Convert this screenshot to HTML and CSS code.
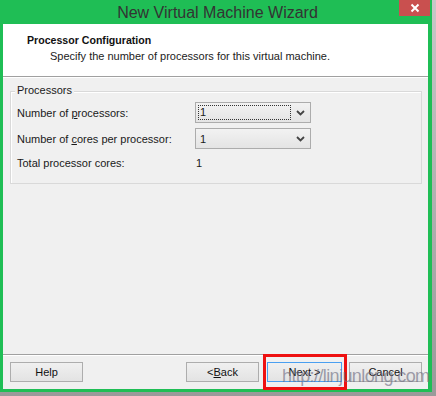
FILE: index.html
```html
<!DOCTYPE html>
<html>
<head>
<meta charset="utf-8">
<link rel="stylesheet" href="styles.css">
</head>
<body>
<div class="window">
  <div class="titlebar">
    <div class="title">New Virtual Machine Wizard</div>
    <div class="close">
      <svg width="10" height="10" viewBox="0 0 10 10"><path d="M1.5 1.5 L8.5 8.5 M8.5 1.5 L1.5 8.5" stroke="#fff" stroke-width="2"/></svg>
    </div>
  </div>
  <div class="client">
    <div class="header">
      <div class="h-title">Processor Configuration</div>
      <div class="h-sub">Specify the number of processors for this virtual machine.</div>
    </div>
    <div class="body">
      <div class="group">
        <div class="legend">Processors</div>
        <div class="row">
          <div class="label">Number of <u>p</u>rocessors:</div>
          <div class="select">
            <div class="focus">1</div>
            <svg class="chev" width="9" height="6" viewBox="0 0 9 6"><path d="M1 1 L4.5 4.5 L8 1" fill="none" stroke="#444" stroke-width="1.8"/></svg>
          </div>
        </div>
        <div class="row">
          <div class="label">Number of <u>c</u>ores per processor:</div>
          <div class="select">
            <div class="val">1</div>
            <svg class="chev" width="9" height="6" viewBox="0 0 9 6"><path d="M1 1 L4.5 4.5 L8 1" fill="none" stroke="#444" stroke-width="1.8"/></svg>
          </div>
        </div>
        <div class="row total">
          <div class="label">Total processor cores:</div>
          <div class="tval">1</div>
        </div>
      </div>
    </div>
    <div class="footer">
      <div class="btn help">Help</div>
      <div class="spacer"></div>
      <div class="btn back">&lt; <u>B</u>ack</div>
      <div class="nextwrap"><div class="btn next">Next &gt;</div></div>
      <div class="btn cancel">Cancel</div>
    </div>
  </div>
</div>
<div class="watermark">http://linjunlong.com</div>
</body>
</html>
```
FILE: styles.css
```css
html, body {
  margin: 0;
  padding: 0;
}
body {
  width: 436px;
  height: 396px;
  background: linear-gradient(to bottom, #c8c8c8, #9a9a9a);
  position: relative;
  overflow: hidden;
  font-family: "Liberation Sans", Arial, sans-serif;
  font-size: 11px;
  color: #1a1a1a;
}
.window {
  width: 432px;
  height: 392px;
  box-sizing: border-box;
  background: #1fbe55;
  padding: 0 4px 3px 3px;
  display: flex;
  flex-direction: column;
}
.titlebar {
  height: 24px;
  position: relative;
  display: flex;
  align-items: center;
  justify-content: center;
}
.title {
  font-size: 16px;
  color: #333;
  padding-top: 2px;
  margin-left: 4px;
}
.close {
  position: absolute;
  right: -2px;
  top: 0;
  width: 31px;
  height: 16px;
  background: #c9504f;
  display: flex;
  align-items: center;
  justify-content: center;
}
.client {
  flex: 1;
  background: #f0f0f0;
  display: flex;
  flex-direction: column;
}
.header {
  height: 53px;
  background: #fff;
  border-bottom: 1px solid #a0a0a0;
  box-shadow: 0 1px 0 #fff;
  box-sizing: border-box;
  padding: 10px 0 0 24px;
}
.h-title {
  font-weight: bold;
  font-size: 10.6px;
  color: #111;
}
.h-sub {
  margin-top: 4px;
  padding-left: 23px;
  color: #222;
}
.body {
  flex: 1;
  padding: 14px 6px 0 7px;
}
.group {
  border: 1px solid #d9d9d9;
  box-shadow: inset 1px 1px 0 #fff;
  height: 93px;
  position: relative;
  padding: 10px 0 0 6px;
  box-sizing: border-box;
}
.legend {
  position: absolute;
  left: 4px;
  top: -8px;
  background: #f0f0f0;
  padding: 0 2px;
}
.row {
  display: flex;
  align-items: center;
  height: 21px;
  margin-bottom: 5px;
}
.row.total {
  margin-top: 4px;
  height: 18px;
}
.label {
  width: 178px;
}
.select {
  width: 116px;
  height: 21px;
  box-sizing: border-box;
  border: 1px solid #acacac;
  background: linear-gradient(to bottom, #f2f2f2, #e4e4e4);
  display: flex;
  align-items: center;
  padding: 2px;
}
.focus {
  width: 93px;
  height: 15px;
  box-sizing: border-box;
  border: 1px dotted #333;
  line-height: 13px;
  padding-left: 1px;
}
.val {
  width: 93px;
  padding-left: 2px;
}
.chev {
  margin-left: auto;
  margin-right: 3px;
}
.tval {
  padding-left: 1px;
}
.footer {
  height: 35px;
  border-top: 1px solid #a0a0a0;
  box-shadow: inset 0 1px 0 #fff;
  display: flex;
  align-items: center;
  padding: 0 6px 0 7px;
  box-sizing: border-box;
}
.spacer {
  flex: 1;
}
.btn {
  width: 73px;
  height: 20px;
  box-sizing: border-box;
  border: 1px solid #adadad;
  background: linear-gradient(to bottom, #f0f0f0, #e3e3e3);
  display: flex;
  align-items: center;
  justify-content: center;
  color: #111;
}
.back {
  margin-right: 4px;
}
.nextwrap {
  border: 3px solid #ee1111;
  padding: 5px 2px 5px 1px;
  margin-right: 2px;
}
.next {
  border-color: #4a9ff0;
  width: 75px;
}
.watermark {
  position: absolute;
  left: 282px;
  top: 366px;
  font-size: 18px;
  color: rgba(110, 110, 130, 0.65);
  letter-spacing: -0.6px;
}
```
